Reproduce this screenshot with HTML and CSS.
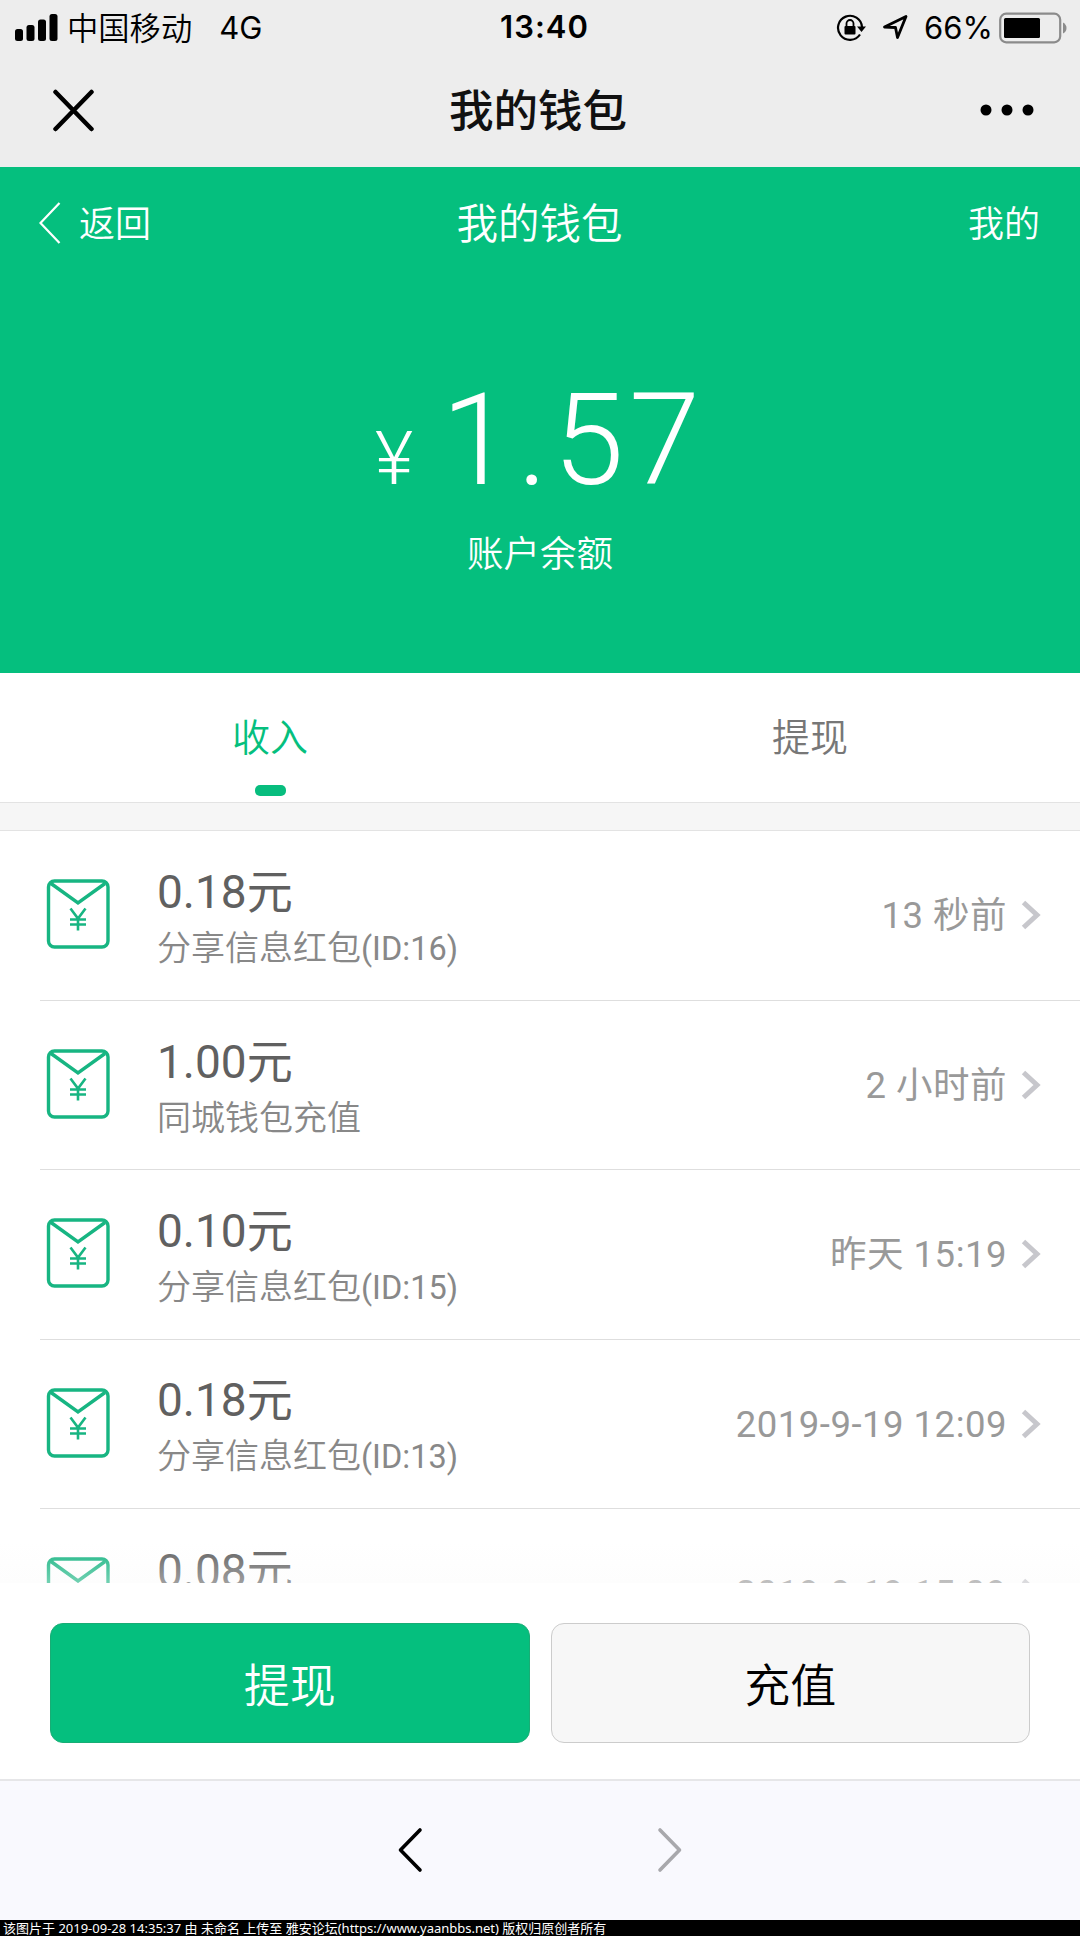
FILE: index.html
```html
<!DOCTYPE html>
<html lang="zh-CN">
<head>
<meta charset="utf-8">
<title>我的钱包</title>
<link rel="stylesheet" href="styles.css">
</head>
<body>
<svg class="defs" aria-hidden="true">
  <symbol id="envelope" viewBox="0 0 64 70">
    <rect x="2.500" y="2" width="59.500" height="66" rx="6"/>
    <path d="M5 4.500 32 24 59 4.500"/>
    <path class="yen" d="M24.500 29.500 32 39.500 39.500 29.500M32 39V51.500M24 40.500H40M24 45.500H40"/>
  </symbol>
  <symbol id="chevron" viewBox="0 0 20 30"><path d="M2.500 2.500 16 15 2.500 27.500"/></symbol>
</svg>

<div class="statusbar">
  <div class="status-left">
    <svg class="signal" width="43" height="27" viewBox="0 0 43 27"><rect x="0" y="15" width="8" height="12" rx="2.500"/><rect x="11.500" y="11" width="8" height="16" rx="2.500"/><rect x="23" y="5.500" width="8" height="21.500" rx="2.500"/><rect x="34.500" y="0" width="8" height="27" rx="2.500"/></svg>
    <span class="carrier">中国移动</span><span class="network">4G</span>
  </div>
  <div class="clock">13:40</div>
  <div class="status-right">
    <svg class="lock" width="31" height="28" viewBox="0 0 31 28"><path class="line" d="M24 20.500A12 12 0 1 1 26 13"/><path d="M21 12.500H30L25.500 18Z"/><rect x="8.500" y="12" width="11" height="8.500" rx="1"/><path class="shackle" d="M10.500 12V9.500a3.500 3.500 0 0 1 7 0V12"/></svg>
    <svg class="locate" width="27" height="27" viewBox="0 0 27 27"><path d="M2.500 13 24 2.500 15.500 23.500 13.500 13.500Z"/></svg>
    <span class="percent">66%</span>
    <svg class="battery" width="70" height="32" viewBox="0 0 70 32"><rect class="shell" x="1.200" y="1.700" width="60" height="28.600" rx="6"/><rect x="5" y="6" width="36" height="20" rx="1.500"/><path class="nub" d="M64 10.500q3.500 2 3.500 5.500t-3.500 5.500Z"/></svg>
  </div>
</div>

<div class="titlebar">
  <svg class="close" width="43" height="43" viewBox="0 0 43 43"><path d="M3.500 3 39.500 40M39.500 3 3.500 40"/></svg>
  <h1>我的钱包</h1>
  <svg class="more" width="54" height="12" viewBox="0 0 54 12"><circle cx="6" cy="6" r="5.500"/><circle cx="27" cy="6" r="5.500"/><circle cx="48" cy="6" r="5.500"/></svg>
</div>

<section class="balance">
  <div class="balance-nav">
    <a class="back"><svg width="22" height="42" viewBox="0 0 22 42"><path d="M20.500 1 1.500 21 20.500 41"/></svg><span>返回</span></a>
    <h2>我的钱包</h2>
    <a class="mine">我的</a>
  </div>
  <div class="amount"><span class="currency">¥</span><span class="figure">1.57</span></div>
  <div class="caption">账户余额</div>
</section>

<nav class="tabs">
  <a class="tab active">收入</a>
  <a class="tab">提现</a>
</nav>

<ul class="records">
  <li class="record">
    <svg class="envelope"><use href="#envelope"/></svg>
    <div class="entry"><div class="detail"><p class="sum">0.18元</p><p class="note">分享信息红包<span>(ID:16)</span></p></div><time>13 秒前</time><svg class="chevron"><use href="#chevron"/></svg></div>
  </li>
  <li class="record">
    <svg class="envelope"><use href="#envelope"/></svg>
    <div class="entry"><div class="detail"><p class="sum">1.00元</p><p class="note">同城钱包充值</p></div><time>2 小时前</time><svg class="chevron"><use href="#chevron"/></svg></div>
  </li>
  <li class="record">
    <svg class="envelope"><use href="#envelope"/></svg>
    <div class="entry"><div class="detail"><p class="sum">0.10元</p><p class="note">分享信息红包<span>(ID:15)</span></p></div><time>昨天 15:19</time><svg class="chevron"><use href="#chevron"/></svg></div>
  </li>
  <li class="record">
    <svg class="envelope"><use href="#envelope"/></svg>
    <div class="entry"><div class="detail"><p class="sum">0.18元</p><p class="note">分享信息红包<span>(ID:13)</span></p></div><time>2019-9-19 12:09</time><svg class="chevron"><use href="#chevron"/></svg></div>
  </li>
  <li class="record">
    <svg class="envelope"><use href="#envelope"/></svg>
    <div class="entry"><div class="detail"><p class="sum">0.08元</p></div><time>2019-9-19 15:09</time><svg class="chevron"><use href="#chevron"/></svg></div>
  </li>
</ul>

<div class="actions">
  <button class="button primary">提现</button>
  <button class="button">充值</button>
</div>

<div class="browser-nav">
  <svg class="prev" width="26" height="46" viewBox="0 0 26 46"><path d="M23 3 3.500 23 23 43"/></svg>
  <svg class="next" width="26" height="46" viewBox="0 0 26 46"><path d="M3 3 22.500 23 3 43"/></svg>
</div>

<footer class="credit">该图片于 2019-09-28 14:35:37 由 未命名 上传至 雅安论坛(https://www.yaanbbs.net) 版权归原创者所有</footer>
</body>
</html>
```
FILE: styles.css
```css
* { box-sizing: border-box; margin: 0; padding: 0; }

body {
  width: 1080px;
  height: 1936px;
  overflow: hidden;
  display: flex;
  flex-direction: column;
  background: #fff;
  font-family: Roboto, "Noto Sans CJK SC", sans-serif;
}

svg { display: block; flex: none; }
.defs { display: none; }

/* Status bar */
.statusbar {
  height: 53px;
  flex: none;
  display: grid;
  grid-template-columns: 1fr auto 1fr;
  padding: 0 11px 0 15px;
  background: #ededed;
  color: #000;
  font: 31px/53px Inter, "Noto Sans CJK SC", sans-serif;
}
.status-left, .status-right { display: flex; align-items: center; }
.status-right { justify-content: flex-end; }
.signal { margin-right: 9px; }
.carrier { font: 350 31.300px/53px "Noto Sans CJK SC", sans-serif; padding-bottom: 2px; }
.network { margin-left: 27px; }
.clock { font-weight: 600; letter-spacing: 1px; padding: 0 0 0 5px; }
.lock { margin-right: 15px; }
.lock .line { fill: none; stroke: #000; stroke-width: 2.2; }
.lock .shackle { fill: none; stroke: #000; stroke-width: 1.8; }
.locate { margin-right: 15px; fill: none; stroke: #000; stroke-width: 2.8; stroke-linejoin: round; }
.percent { margin-right: 6px; }
.battery .shell { fill: none; stroke: #8b8b8b; stroke-width: 2.2; }
.battery .nub { fill: #8b8b8b; }

/* App title */
.titlebar {
  height: 114px;
  flex: none;
  display: grid;
  grid-template-columns: 1fr auto 1fr;
  align-items: center;
  padding: 0 46px 0 42px;
  background: #ededed;
  color: #111;
}
.titlebar h1 { font: 500 44.500px/108px "Noto Sans CJK SC", sans-serif; padding-bottom: 5px; }
.close { margin-left: 10px; stroke: #000; stroke-width: 4.5; stroke-linecap: round; }
.more { justify-self: end; }

/* Balance */
.balance {
  height: 506px;
  flex: none;
  background: #05bf7e;
  color: #fff;
  text-align: center;
}
.balance-nav {
  height: 112px;
  display: grid;
  grid-template-columns: 1fr auto 1fr;
  align-items: center;
  padding: 0 40px 0 39px;
  font: 350 36px/52px "Noto Sans CJK SC", sans-serif;
}
.balance-nav h2 { font-size: 41.500px; font-weight: 350; padding-bottom: 5px; }
.back { display: flex; align-items: center; gap: 18px; }
.back span { padding-bottom: 5px; }
.back svg { fill: none; stroke: #fff; stroke-width: 2.2; }
.mine { text-align: right; padding-bottom: 5px; }
.amount {
  height: 236px;
  display: flex;
  justify-content: center;
  align-items: baseline;
  padding-top: 86px;
  line-height: 150px;
  font-weight: 300;
}
.currency { font-size: 74px; margin-right: 28px; }
.figure { font-size: 128px; letter-spacing: 5px; }
.caption { font: 350 36.500px/74px "Noto Sans CJK SC", sans-serif; }

/* Tabs */
.tabs {
  height: 130px;
  flex: none;
  display: grid;
  grid-template-columns: 1fr 1fr;
  border-bottom: 1px solid #e3e3e3;
}
.tab {
  display: flex;
  flex-direction: column;
  align-items: center;
  font: 350 38px/56px "Noto Sans CJK SC", sans-serif;
  padding-top: 34px;
  color: #777;
}
.tab.active { color: #05bf7e; }
.tab.active::after {
  content: "";
  width: 31px;
  height: 11px;
  margin-top: 22px;
  border-radius: 5px;
  background: #07bd7e;
}

/* Records */
.records {
  height: 780px;
  flex: none;
  overflow: hidden;
  border-top: 27px solid #f6f6f6;
  background: #fff;
  list-style: none;
  position: relative;
}
.records::before { content: ""; display: block; height: 1px; background: #e3e3e3; }
.records::after {
  content: "";
  position: absolute;
  inset: auto 0 0;
  height: 40px;
  background: linear-gradient(rgba(250, 250, 250, 0), rgba(250, 250, 250, .4));
}
.record {
  height: 169.500px;
  display: flex;
  margin-left: 40px;
  padding-left: 6px;
  border-bottom: 1px solid #dedede;
}
.envelope {
  width: 64px;
  height: 70px;
  margin: 48px 47px 0 0;
  fill: none;
  stroke: #17b582;
  stroke-width: 3.4;
  overflow: visible;
}
.yen { stroke-width: 2.6; }
.entry { flex: 1; display: flex; align-items: center; padding-right: 39px; }
.detail { flex: 1; min-height: 119px; padding-top: 7px; }
.sum { font-size: 46px; line-height: 60px; color: #606060; }
.note { font-size: 34px; line-height: 53px; color: #888; font-weight: 350; }
.note span { font-size: 32.500px; font-weight: 400; }
time { font-size: 36.500px; line-height: 52px; letter-spacing: .5px; color: #999; margin-right: 14px; padding-top: 2px; }
.chevron { width: 20px; height: 30px; fill: none; stroke: #c7c7cc; stroke-width: 5; }

/* Actions */
.actions {
  height: 196px;
  flex: none;
  display: flex;
  gap: 21px;
  padding: 40px 50px 0;
}
.button {
  flex: 1;
  height: 120px;
  padding-bottom: 2px;
  border: 1.500px solid #ccc;
  border-radius: 13px;
  background: #f7f7f7;
  color: #000;
  font: 350 46px "Noto Sans CJK SC", sans-serif;
}
.button.primary { border-color: #18ad75; background: #05bf7e; color: #fff; }

/* Browser navigation */
.browser-nav {
  height: 141px;
  flex: none;
  display: flex;
  justify-content: center;
  gap: 234px;
  padding-top: 46px;
  border-top: 2px solid #e6e6e8;
  background: #f9f9fe;
}
.browser-nav svg { fill: none; stroke: #000; stroke-width: 3.6; stroke-linecap: round; stroke-linejoin: round; }
.browser-nav .next { stroke: #a8a8ac; }

.credit {
  height: 16px;
  flex: none;
  padding-left: 3px;
  background: #000;
  color: #fff;
  font: 13px/16px "Noto Sans", "Noto Sans CJK SC", sans-serif;
  white-space: nowrap;
}
```
